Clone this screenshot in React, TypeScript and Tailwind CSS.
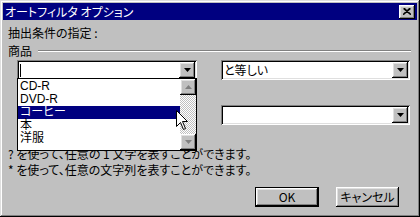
import React from 'react';

const raised =
  'shadow-[inset_-1px_-1px_#000,inset_1px_1px_#fff,inset_-2px_-2px_#808080,inset_2px_2px_#dfdfdf]';
const sunken =
  'shadow-[inset_1px_1px_#808080,inset_-1px_-1px_#fff,inset_2px_2px_#000,inset_-2px_-2px_#dfdfdf]';

const Arrow: React.FC<{ up?: boolean; gray?: boolean }> = ({ up, gray }) => (
  <svg width="7" height="4" viewBox="0 0 7 4" className={up ? 'rotate-180' : ''}>
    <polygon points="0,0 7,0 3.5,4" fill={gray ? '#808080' : '#000'} />
  </svg>
);

const DropButton: React.FC<{ gray?: boolean; up?: boolean }> = ({ gray, up }) => (
  <div className={`flex h-[16px] w-[16px] items-center justify-center bg-[#c0c0c0] ${raised}`}>
    <Arrow gray={gray} up={up} />
  </div>
);

const Combo: React.FC<{ width: string; children?: React.ReactNode }> = ({ width, children }) => (
  <div className={`flex h-[20px] items-center bg-white pl-[3px] pr-[2px] ${sunken} ${width}`}>
    <div className="flex-1 text-[12px] leading-[14px]">{children}</div>
    <DropButton />
  </div>
);

const items = ['CD-R', 'DVD-R', 'コーヒー', '本', '洋服'];

export default function App() {
  return (
    <div
      className="relative h-[217px] w-[420px] bg-[#c0c0c0] p-[3px] text-black [font-feature-settings:'palt'] shadow-[inset_-1px_-1px_#000,inset_1px_1px_#dfdfdf,inset_-2px_-2px_#808080,inset_2px_2px_#fff]"
      style={{ fontFamily: '"Noto Sans CJK JP", "Noto Sans", sans-serif' }}
    >
      {/* title bar */}
      <div className="flex h-[17px] items-center bg-[#000080] pl-[2px] pr-[2px]">
        <span className="flex-1 text-[12px] leading-[14px] text-white">オートフィルタ オプション</span>
        <div className={`flex h-[14px] w-[16px] items-center justify-center bg-[#c0c0c0] ${raised}`}>
          <svg width="8" height="7" viewBox="0 0 8 7">
            <path d="M0.5 0.5 L7.5 6.5 M7.5 0.5 L0.5 6.5 M1.5 0.5 L8 6.5 M6.5 0.5 L0 6.5" stroke="#000" strokeWidth="1.2" />
          </svg>
        </div>
      </div>

      <div className="pl-[5px]">
        <div className="mt-[6px] text-[12px] leading-[14px]">抽出条件の指定 :</div>

        <div className="mt-[4px] flex h-[14px] items-center">
          <span className="text-[12px] leading-[14px]">商品</span>
          <div className="ml-[6px] mr-[6px] flex-1 border-t border-b border-t-[#808080] border-b-white" />
        </div>

        <div className="mt-[2px] flex">
          <div className="ml-[9px]">
            <Combo width="w-[180px]">
              <div className="h-[13px] w-px bg-black" />
            </Combo>
          </div>
          <div className="ml-[24px]">
            <Combo width="w-[189px]">と等しい</Combo>
          </div>
        </div>

        <div className="mt-[25px] flex">
          <div className="ml-[9px]">
            <Combo width="w-[180px]" />
          </div>
          <div className="ml-[24px]">
            <Combo width="w-[189px]" />
          </div>
        </div>

        <div className="mt-[21px] text-[12px] leading-[16px]">
          <div>? を使って、任意の 1 文字を表すことができます。</div>
          <div>* を使って、任意の文字列を表すことができます。</div>
        </div>

        <div className="mt-[9px] flex justify-end gap-[17px] pr-[18px]">
          <button className="h-[20px] w-[64px] border border-black bg-[#c0c0c0] p-0">
            <div className={`flex h-full w-full items-center justify-center text-[12px] ${raised}`}>OK</div>
          </button>
          <button className={`h-[20px] w-[63px] bg-[#c0c0c0] text-[12px] ${raised}`}>キャンセル</button>
        </div>
      </div>

      {/* open dropdown list */}
      <div className="absolute left-[17px] top-[78px] flex h-[73px] w-[180px] border border-black bg-white">
        <div className="flex-1 pt-[1px] font-['Liberation_Sans','Noto_Sans_CJK_JP',sans-serif]">
          {items.map((it) => (
            <div
              key={it}
              className={`h-[13px] pl-[2px] text-[12px] leading-[13px] ${
                it === 'コーヒー' ? 'bg-[#000080] text-white' : ''
              }`}
            >
              {it}
            </div>
          ))}
        </div>
        <div className="flex w-[16px] flex-col">
          <DropButton gray up />
          <div className="flex-1 bg-[repeating-conic-gradient(#c0c0c0_0_25%,#fff_0_50%)] bg-[length:2px_2px]" />
          <DropButton gray />
        </div>
      </div>

      {/* mouse cursor */}
      <svg className="absolute left-[176px] top-[110px]" width="13" height="21" viewBox="0 0 13 21">
        <path
          d="M0.5 0.5 L0.5 16.5 L4.5 12.5 L7.5 19.5 L9.5 18.5 L6.5 11.5 L11.5 11.5 Z"
          fill="#fff"
          stroke="#000"
          strokeWidth="1"
        />
      </svg>
    </div>
  );
}
